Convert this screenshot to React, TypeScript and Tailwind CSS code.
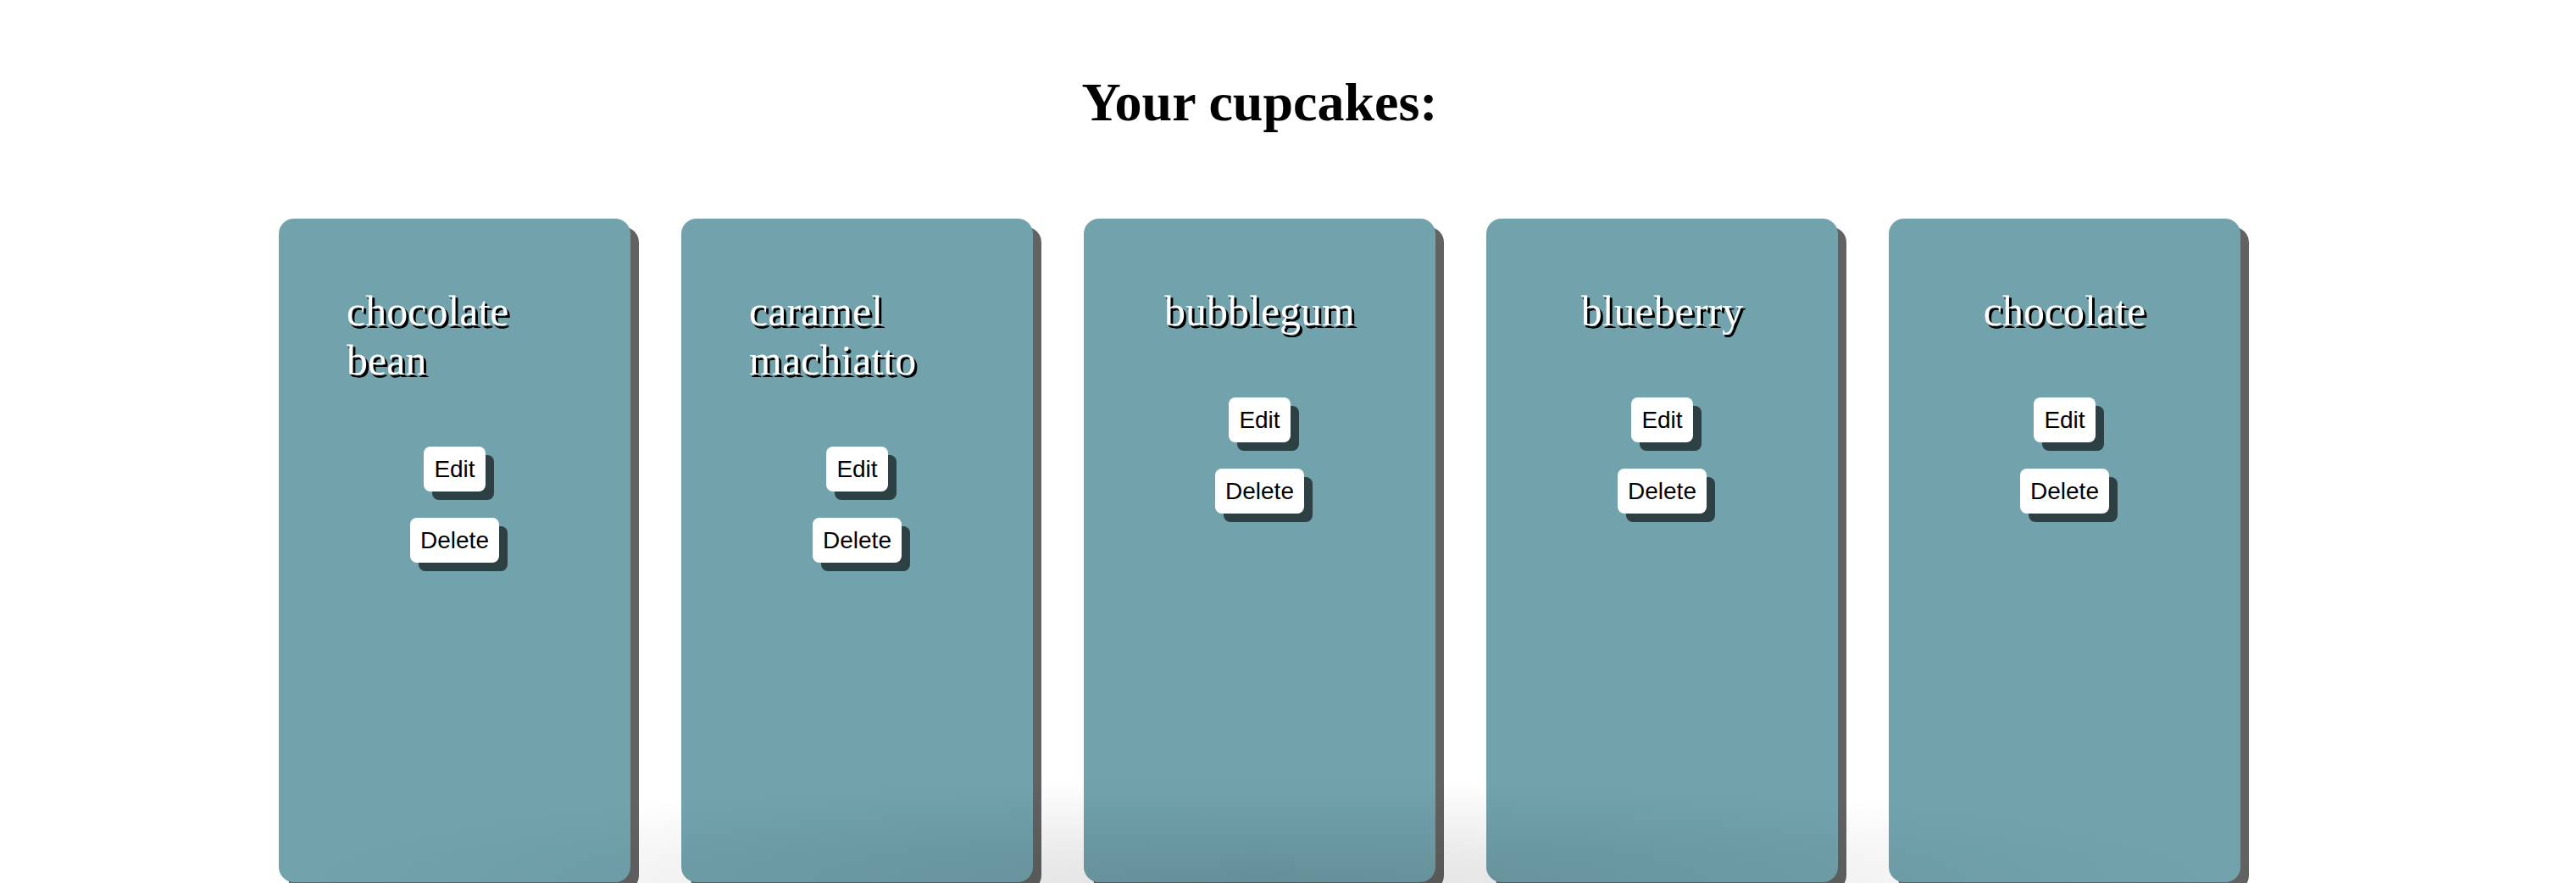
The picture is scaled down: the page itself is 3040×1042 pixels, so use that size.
const cupcakes = [
    { id: 1, flavor: "chocolate bean" },
    { id: 2, flavor: "caramel machiatto" },
    { id: 3, flavor: "bubblegum" },
    { id: 4, flavor: "blueberry" },
    { id: 5, flavor: "chocolate" },
];

type CupcakeCardProps = {
    flavor: string;
};

function CupcakeCard({ flavor }: CupcakeCardProps) {
    return (
        <div className="flex flex-col items-center w-[415px] h-[783px] shrink-0 bg-[#72a3ad] rounded-[18px] px-[80px] pt-[80px] shadow-[10px_10px_0_#626262]">
            <h2 className="m-0 text-[50px] leading-[58px] font-normal text-white [text-shadow:3px_3px_0_#000,2px_3px_0_#000] font-['Liberation_Serif',serif]">
                {flavor}
            </h2>
            <div className="flex flex-col items-center gap-[31px] mt-[73px]">
                <button className="bg-white text-black text-[28px] leading-[33px] px-[12px] py-[10px] rounded-[8px] shadow-[10px_10px_0_#2d4145] font-['Liberation_Sans',Arial,sans-serif]">
                    Edit
                </button>
                <button className="bg-white text-black text-[28px] leading-[33px] px-[12px] py-[10px] rounded-[8px] shadow-[10px_10px_0_#2d4145] font-['Liberation_Sans',Arial,sans-serif]">
                    Delete
                </button>
            </div>
        </div>
    );
}

export default function App() {
    return (
        <div className="relative h-[1042px] overflow-hidden bg-white pr-[67px]">
            <h1 className="m-0 pt-[84px] text-center text-[64px] leading-[74px] font-bold text-black font-['Liberation_Serif',serif]">
                Your cupcakes:
            </h1>
            <div className="flex justify-center gap-[60px] mt-[100px]">
                {cupcakes.map((c) => (
                    <CupcakeCard key={c.id} flavor={c.flavor} />
                ))}
            </div>
            <div className="pointer-events-none absolute bottom-0 left-0 right-[67px] h-[160px] bg-[radial-gradient(ellipse_1150px_125px_at_50%_100%,rgba(0,0,0,0.12),transparent)]" />
        </div>
    );
}
